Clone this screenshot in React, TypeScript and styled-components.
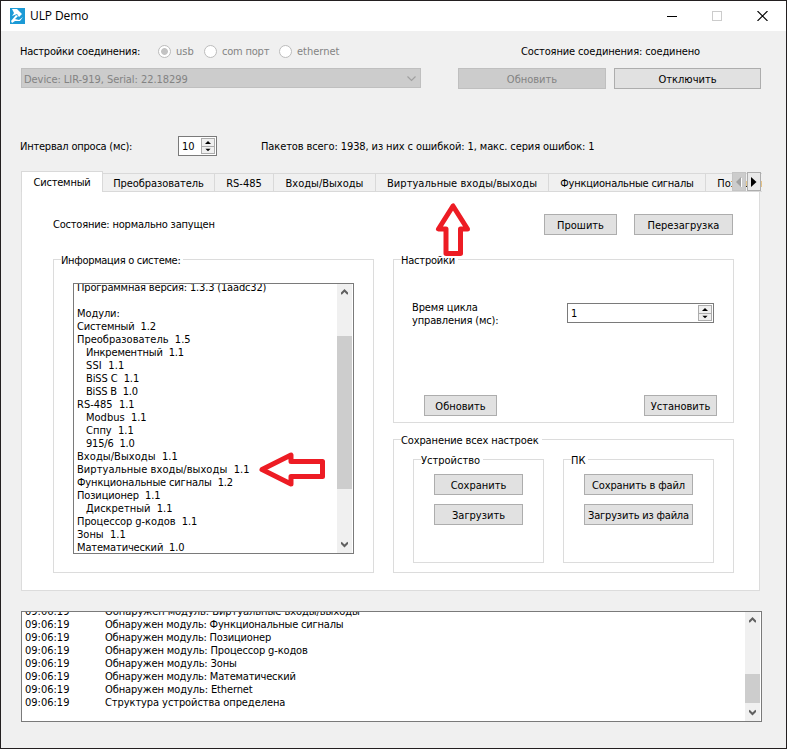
import React from "react";
import styled, { createGlobalStyle, css } from "styled-components";

const GlobalStyle = createGlobalStyle`
  * {
    box-sizing: border-box;
  }

  body {
    margin: 0;
    background: #f0f0f0;
    color: #000;
    font-family: "DejaVu Sans Condensed", "DejaVu Sans", sans-serif;
    font-stretch: condensed;
    font-size: 11px;
    line-height: 13px;
  }
`;

const Window = styled.div`
  display: flex;
  flex-direction: column;
  width: 787px;
  height: 749px;
  border: 1px solid #231f20;
  background: #f0f0f0;
  overflow: hidden;
  white-space: pre;
`;

const TitleBar = styled.header`
  display: flex;
  align-items: center;
  height: 30px;
  padding: 0 18px 0 9px;
  background: #fff;
`;

const WindowTitle = styled.h1`
  flex: 1;
  margin: -2px 0 0 5px;
  font-family: "Open Sans", sans-serif;
  font-size: 12px;
  font-stretch: normal;
  font-weight: 400;
  letter-spacing: -0.1px;
`;

const WindowControls = styled.div`
  display: flex;
  gap: 34px;
`;

const Body = styled.main`
  padding: 10px 24px 0 20px;
`;

const Row = styled.div<{ $height: number; $top?: number }>`
  display: flex;
  align-items: center;
  height: ${({ $height }) => $height}px;
  margin-top: ${({ $top = 0 }) => $top}px;
`;

const Label = styled.span<{ $width?: number; $spacing?: number }>`
  flex: none;
  width: ${({ $width }) => ($width ? `${$width}px` : "auto")};
  letter-spacing: ${({ $spacing = 0 }) => $spacing}px;
`;

const FieldLabel = styled(Label)`
  margin-left: -1px;
`;

const RadioLabel = styled.label<{ $width: number }>`
  display: flex;
  align-items: center;
  gap: 5px;
  width: ${({ $width }) => $width}px;
  color: #838383;
`;

const RadioDot = styled.span<{ $checked?: boolean }>`
  width: 13px;
  height: 13px;
  border: 1px solid #bcbcbc;
  border-radius: 50%;
  background: ${({ $checked }) =>
    $checked ? "radial-gradient(circle, #c3c3c3 3px, #fff 3.8px)" : "#fff"};
`;

const ComboBox = styled.div`
  display: flex;
  align-items: center;
  align-self: flex-start;
  justify-content: space-between;
  width: 400px;
  height: 20px;
  margin-right: 37px;
  padding: 2px 4px 0 2px;
  border: 1px solid #bfbfbf;
  background: #ccc;
  color: #838383;
`;

const Button = styled.button<{ $width: number; $spacing?: number }>`
  width: ${({ $width }) => $width}px;
  height: 21px;
  padding: 1px 0 0;
  border: 1px solid #adadad;
  background: #e1e1e1;
  color: #000;
  font: inherit;
  letter-spacing: ${({ $spacing = 0 }) => $spacing}px;
  line-height: 13px;
  text-align: center;
  white-space: nowrap;

  &:disabled {
    border-color: #bfbfbf;
    background: #ccc;
    color: #838383;
  }
`;

const SpinBox = styled.div<{ $width: number }>`
  display: flex;
  justify-content: space-between;
  width: ${({ $width }) => $width}px;
  height: 20px;
  padding: 1px 1px 1px 3px;
  border: 1px solid #7a7a7a;
  background: #fff;
  line-height: 18px;
`;

const SpinButtons = styled.div`
  display: flex;
  flex-direction: column;
  width: 14px;
  border: 1px solid #acacac;
  background: #f0f0f0;

  svg {
    display: block;
    width: 12px;
    height: 7px;
  }

  svg + svg {
    border-top: 1px solid #acacac;
  }
`;

const TabBar = styled.nav`
  position: relative;
  display: flex;
  align-items: flex-end;
  width: 741px;
  height: 21px;
  margin: 15px 0 -1px;
  overflow: hidden;
`;

const Tab = styled.div<{ $width: number; $spacing?: number; $active?: boolean }>`
  flex: none;
  width: ${({ $width }) => $width}px;
  height: 19px;
  padding-top: 3px;
  border: 1px solid #d9d9d9;
  border-left: 0;
  letter-spacing: ${({ $spacing = 0 }) => $spacing}px;
  text-align: center;

  ${({ $active }) =>
    $active &&
    css`
      height: 21px;
      padding-top: 4px;
      border-left: 1px solid #d9d9d9;
      border-bottom: 0;
      background: #fff;
    `}
`;

const TabScroll = styled.div`
  position: absolute;
  top: 1px;
  right: 1px;
  display: flex;
  gap: 1px;
`;

const TabScrollButton = styled.div<{ $disabled?: boolean }>`
  display: flex;
  align-items: center;
  justify-content: center;
  width: 14px;
  height: 19px;
  border: 1px solid ${({ $disabled }) => ($disabled ? "#c4c4c4" : "#adadad")};
  background: ${({ $disabled }) => ($disabled ? "#ccc" : "#e9e9e9")};
`;

const TabPanel = styled.section`
  width: 739px;
  height: 400px;
  padding: 22px 25px 0 31px;
  border: 1px solid #dcdcdc;
  background: #fff;
`;

const Columns = styled.div`
  display: flex;
  justify-content: space-between;
  margin-top: 24px;
`;

const GroupBox = styled.section<{ $width: number; $height: number }>`
  width: ${({ $width }) => $width}px;
  height: ${({ $height }) => $height}px;
  border: 1px solid #dcdcdc;
`;

const GroupTitle = styled.h2<{ $spacing?: number }>`
  width: fit-content;
  height: 13px;
  margin: -6px 0 0 7px;
  padding-right: 3px;
  background: #fff;
  font-size: 11px;
  font-weight: 400;
  letter-spacing: ${({ $spacing = 0 }) => $spacing}px;
`;

const TextArea = styled.div<{ $width: number; $height: number }>`
  display: flex;
  justify-content: space-between;
  width: ${({ $width }) => $width}px;
  height: ${({ $height }) => $height}px;
  padding-right: 1px;
  border: 1px solid #7a7a7a;
  background: #fff;
  overflow: hidden;
`;

const InfoArea = styled(TextArea)`
  margin: 16px 0 0 19px;
`;

const LogArea = styled(TextArea)`
  margin-top: 20px;
`;

const Lines = styled.div<{ $shift: number }>`
  margin-top: ${({ $shift }) => $shift}px;
  padding-left: 3px;
`;

const Line = styled.div<{ $indent?: boolean }>`
  display: flex;
  height: 13px;
  padding-left: ${({ $indent }) => ($indent ? 9 : 0)}px;
`;

const ScrollBar = styled.div`
  display: flex;
  flex-direction: column;
  width: 15px;
  height: 100%;
  background: #f0f0f0;

  svg {
    flex: none;
    margin: 5px 4px;
  }
`;

const ScrollThumb = styled.div<{ $top: number; $height: number }>`
  height: ${({ $height }) => $height}px;
  margin: ${({ $top }) => $top}px 0 auto;
  background: #cdcdcd;
`;

const Stack = styled.div`
  display: flex;
  flex-direction: column;
  gap: 16px;
`;

const SettingRow = styled.div`
  display: flex;
  align-items: flex-end;
  justify-content: space-between;
  height: 26px;
  margin: 34px 19px 0 18px;

  ${SpinBox} {
    margin-bottom: 4px;
  }
`;

const SettingButtons = styled.div`
  display: flex;
  justify-content: space-between;
  margin: 68px 16px 0 30px;
`;

const SaveGroups = styled.div`
  display: flex;
  gap: 19px;
  margin: 12px 0 0 19px;
`;

const SaveButtons = styled.div`
  display: flex;
  flex-direction: column;
  gap: 9px;
  margin: 7px 0 0 20px;
`;

const Annotations = styled.svg`
  position: absolute;
  top: 0;
  left: 0;
  pointer-events: none;
`;

interface TextLine {
  text: string;
  spacing?: number;
  indent?: boolean;
}

const modules: TextLine[] = [
  { text: "Программная версия: 1.3.3 (1aadc32)", spacing: -0.17 },
  { text: "" },
  { text: "Модули:", spacing: -0.1 },
  { text: "Системный  1.2", spacing: -0.14 },
  { text: "Преобразователь  1.5" },
  { text: "Инкрементный  1.1", spacing: -0.17, indent: true },
  { text: "SSI  1.1", spacing: 0.1, indent: true },
  { text: "BiSS C  1.1", spacing: -0.1, indent: true },
  { text: "BiSS B  1.0", spacing: -0.2, indent: true },
  { text: "RS-485  1.1" },
  { text: "Modbus  1.1", indent: true },
  { text: "Сппу  1.1", indent: true },
  { text: "915/6  1.0", spacing: -0.2, indent: true },
  { text: "Входы/Выходы  1.1", spacing: 0.06 },
  { text: "Виртуальные входы/выходы  1.1", spacing: 0.06 },
  { text: "Функциональные сигналы  1.2", spacing: -0.15 },
  { text: "Позиционер  1.1", spacing: -0.13 },
  { text: "Дискретный  1.1", indent: true },
  { text: "Процессор g-кодов  1.1", spacing: -0.06 },
  { text: "Зоны  1.1" },
  { text: "Математический  1.0", spacing: -0.16 },
];

const log: TextLine[] = [
  { text: "Обнаружен модуль: Виртуальные входы/выходы", spacing: -0.05 },
  { text: "Обнаружен модуль: Функциональные сигналы", spacing: -0.19 },
  { text: "Обнаружен модуль: Позиционер", spacing: -0.19 },
  { text: "Обнаружен модуль: Процессор g-кодов", spacing: -0.14 },
  { text: "Обнаружен модуль: Зоны", spacing: -0.14 },
  { text: "Обнаружен модуль: Математический", spacing: -0.18 },
  { text: "Обнаружен модуль: Ethernet", spacing: -0.12 },
  { text: "Структура устройства определена", spacing: -0.08 },
];

const tabs = [
  { title: "Системный", width: 82, spacing: -0.2 },
  { title: "Преобразователь", width: 112, spacing: -0.06 },
  { title: "RS-485", width: 59 },
  { title: "Входы/Выходы", width: 102 },
  { title: "Виртуальные входы/выходы", width: 173, spacing: 0.05 },
  { title: "Функциональные сигналы", width: 157, spacing: -0.21 },
  { title: "Позиционер", width: 86, spacing: -0.1 },
];

const AppIcon = () => (
  <svg width="15" height="16" viewBox="0 0 15 16">
    <rect width="15" height="16" fill="#1b9ad6" />
    <path d="M2 1h5l5 5-3 3-2-3-5 2 2-3z" fill="#fff" />
    <path d="M1 13l5-6 2 1-3 3 4 1 4-3-3 4H5l-3 2z" fill="#fff" />
  </svg>
);

interface ChevronProps {
  up?: boolean;
}

const Chevron: React.FC<ChevronProps> = ({ up }) => (
  <svg width="7" height="8" viewBox="0 0 7 8">
    <path
      d={up ? "M0 5L3.5 1.5 7 5" : "M0 2.5L3.5 6 7 2.5"}
      fill="none"
      stroke="#606060"
      strokeWidth="2"
    />
  </svg>
);

interface SpinProps {
  value: string;
  width: number;
}

const Spin: React.FC<SpinProps> = ({ value, width }) => (
  <SpinBox $width={width}>
    {value}
    <SpinButtons>
      <svg viewBox="0 0 12 7">
        <path d="M3 5l3-3 3 3z" />
      </svg>
      <svg viewBox="0 0 12 7">
        <path d="M3 2l3 3 3-3z" />
      </svg>
    </SpinButtons>
  </SpinBox>
);

interface ScrollProps {
  top: number;
  height: number;
}

const Scroll: React.FC<ScrollProps> = ({ top, height }) => (
  <ScrollBar>
    <Chevron up />
    <ScrollThumb $top={top} $height={height} />
    <Chevron />
  </ScrollBar>
);

const App: React.FC = () => {
  return (
    <Window>
      <GlobalStyle />
      <TitleBar>
        <AppIcon />
        <WindowTitle>ULP Demo</WindowTitle>
        <WindowControls>
          <svg width="11" height="10">
            <path d="M0 5.5h10" stroke="#000" />
          </svg>
          <svg width="11" height="10">
            <rect x="0.5" y="0.5" width="9" height="9" fill="none" stroke="#ccc" />
          </svg>
          <svg width="11" height="10">
            <path d="M0.500 0l10 10M10.500 0l-10 10" stroke="#000" strokeWidth="1.1" />
          </svg>
        </WindowControls>
      </TitleBar>

      <Body>
        <Row $height={20}>
          <FieldLabel $width={138} $spacing={-0.22}>
            Настройки соединения:
          </FieldLabel>
          <RadioLabel $width={46}>
            <RadioDot $checked />
            usb
          </RadioLabel>
          <RadioLabel $width={75}>
            <RadioDot />
            <Label $spacing={-0.2}>com порт</Label>
          </RadioLabel>
          <RadioLabel $width={242}>
            <RadioDot />
            ethernet
          </RadioLabel>
          <Label $spacing={-0.13}>Состояние соединения: соединено</Label>
        </Row>
        <Row $height={21} $top={7}>
          <ComboBox>
            <Label $spacing={-0.06}>Device: LIR-919, Serial: 22.18299</Label>
            <svg width="9" height="6">
              <path d="M0.500 0.500l4 4 4-4" fill="none" stroke="#a0a0a0" strokeWidth="1.200" />
            </svg>
          </ComboBox>
          <Button $width={148} disabled>
            Обновить
          </Button>
          <Label $width={8} />
          <Button $width={147}>Отключить</Button>
        </Row>
        <Row $height={20} $top={47}>
          <FieldLabel $width={158} $spacing={-0.22}>
            Интервал опроса (мс):
          </FieldLabel>
          <Spin value="10" width={39} />
          <Label $width={44} />
          <Label $spacing={-0.11}>
            Пакетов всего: 1938, из них с ошибкой: 1, макс. серия ошибок: 1
          </Label>
        </Row>

        <TabBar>
          {tabs.map((tab, index) => (
            <Tab
              key={tab.title}
              $width={tab.width}
              $spacing={tab.spacing}
              $active={index === 0}
            >
              {tab.title}
            </Tab>
          ))}
          <TabScroll>
            <TabScrollButton $disabled>
              <svg width="6" height="10">
                <path d="M5 0v10L0 5z" fill="#a0a0a0" />
                <path d="M5.500 1v9" stroke="#fff" />
              </svg>
            </TabScrollButton>
            <TabScrollButton>
              <svg width="6" height="10">
                <path d="M0 0v10l5.500-5z" />
              </svg>
            </TabScrollButton>
          </TabScroll>
        </TabBar>
        <TabPanel>
          <Row $height={21}>
            <Label $width={491} $spacing={-0.2}>
              Состояние: нормально запущен
            </Label>
            <Button $width={73}>Прошить</Button>
            <Label $width={17} />
            <Button $width={99}>Перезагрузка</Button>
          </Row>
          <Columns>
            <GroupBox $width={321} $height={314}>
              <GroupTitle $spacing={-0.3}>Информация о системе:</GroupTitle>
              <InfoArea $width={281} $height={271}>
                <Lines $shift={-3}>
                  {modules.map((line, index) => (
                    <Line key={index} $indent={line.indent}>
                      <Label $spacing={line.spacing}>{line.text}</Label>
                    </Line>
                  ))}
                </Lines>
                <Scroll top={34} height={153} />
              </InfoArea>
            </GroupBox>
            <Stack>
              <GroupBox $width={341} $height={164}>
                <GroupTitle $spacing={-0.2}>Настройки</GroupTitle>
                <SettingRow>
                  <Label $spacing={-0.15}>{"Время цикла\nуправления (мс):"}</Label>
                  <Spin value="1" width={147} />
                </SettingRow>
                <SettingButtons>
                  <Button $width={73}>Обновить</Button>
                  <Button $width={73}>Установить</Button>
                </SettingButtons>
              </GroupBox>
              <GroupBox $width={341} $height={134}>
                <GroupTitle $spacing={-0.12}>Сохранение всех настроек</GroupTitle>
                <SaveGroups>
                  <GroupBox $width={131} $height={104}>
                    <GroupTitle>Устройство</GroupTitle>
                    <SaveButtons>
                      <Button $width={89}>Сохранить</Button>
                      <Button $width={89}>Загрузить</Button>
                    </SaveButtons>
                  </GroupBox>
                  <GroupBox $width={151} $height={104}>
                    <GroupTitle>ПК</GroupTitle>
                    <SaveButtons>
                      <Button $width={109} $spacing={-0.12}>
                        Сохранить в файл
                      </Button>
                      <Button $width={109} $spacing={-0.2}>
                        Загрузить из файла
                      </Button>
                    </SaveButtons>
                  </GroupBox>
                </SaveGroups>
              </GroupBox>
            </Stack>
          </Columns>
        </TabPanel>

        <LogArea $width={741} $height={111}>
          <Lines $shift={-7}>
            {log.map((line) => (
              <Line key={line.text}>
                <Label $width={80}>09:06:19</Label>
                <Label $spacing={line.spacing}>{line.text}</Label>
              </Line>
            ))}
          </Lines>
          <Scroll top={44} height={29} />
        </LogArea>
      </Body>

      <Annotations width="787" height="749" fill="none" stroke="#ed1c24" strokeWidth="5">
        <path d="M453 206L438.500 229H446v24.500h14.500V229h7z" strokeLinejoin="round" />
        <path d="M262 469.500L291 455v6.500h31.500v15H291v7.500z" strokeLinejoin="round" />
      </Annotations>
    </Window>
  );
};

export default App;
